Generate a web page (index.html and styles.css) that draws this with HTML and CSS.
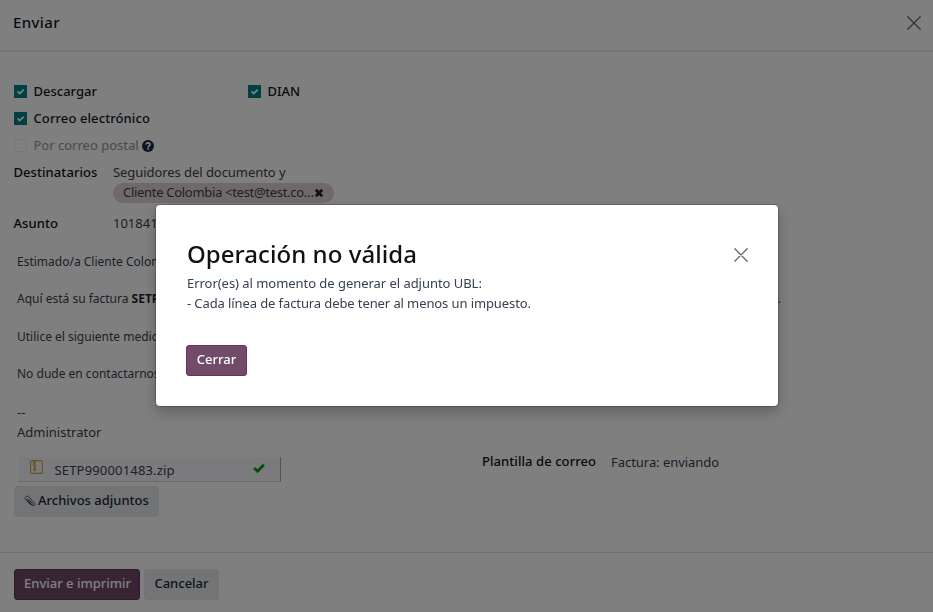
FILE: index.html
```html
<!DOCTYPE html>
<html lang="es">
<head>
<meta charset="utf-8">
<title>Enviar</title>
<link rel="stylesheet" href="styles.css">
</head>
<body>
<section class="wizard">
  <header class="wizard-header">
    <h1 class="wizard-title">Enviar</h1>
    <svg class="close-icon" viewBox="0 0 16 16"><path d="M1.8 1.8 14.2 14.2M14.2 1.8 1.8 14.2"/></svg>
  </header>
  <main class="wizard-body">
    <div class="options">
      <div class="option"><span class="check"><svg viewBox="0 0 13 13"><path d="M3.5 6.4 5.7 8.6 9.7 4.7"/></svg></span><span class="option-name">Descargar</span></div>
      <div class="option"><span class="check"><svg viewBox="0 0 13 13"><path d="M3.5 6.4 5.7 8.6 9.7 4.7"/></svg></span><span class="option-name">DIAN</span></div>
      <div class="option wide email"><span class="check"><svg viewBox="0 0 13 13"><path d="M3.5 6.4 5.7 8.6 9.7 4.7"/></svg></span><span class="option-name">Correo electrónico</span></div>
      <div class="option wide disabled"><span class="check empty"></span><span class="option-name">Por correo postal</span>
        <svg class="help" viewBox="0 0 12 12"><circle cx="6" cy="6" r="6"/><path d="M4.1 4.5C4.3 2.4 8 2.4 8 4.6 8 6 6.1 5.9 6.1 7.4M6.1 8.2V9.8"/></svg></div>
    </div>
    <div class="field recipients">
      <span class="label">Destinatarios</span>
      <div>
        <div class="line">Seguidores del documento y</div>
        <div class="tag"><span>Cliente Colombia &lt;test@test.co…</span><svg viewBox="0 0 10 10"><path d="M1.8 1.8 8.2 8.2M8.2 1.8 1.8 8.2"/></svg></div>
      </div>
    </div>
    <div class="field subject"><span class="label">Asunto</span><span class="value">101841</span></div>
    <div class="message">
      <p>Estimado/a Cliente Colom</p>
      <p class="spread"><span>Aquí está su factura <b>SETP</b></span><span>.</span></p>
      <p>Utilice el siguiente medio</p>
      <p>No dude en contactarnos</p>
      <p class="signature">--<br>Administrator</p>
    </div>
    <div class="columns">
      <div>
        <div class="attachment">
          <svg class="zip" viewBox="0 0 13 14"><rect x=".6" y=".6" width="11.8" height="12.8" rx="1"/><path d="M3.6 1V6M5.2 1V6M4.4 6 3.8 10.5H5.4L4.8 6"/></svg>
          <span class="filename">SETP990001483.zip</span>
          <svg class="done" viewBox="0 0 12 10"><path d="M1.2 5 4.5 8.2 10.8 1.8"/></svg>
        </div>
        <div class="btn secondary attach"><svg class="clip" viewBox="0 0 12 13"><path d="M2.8 4.2 8 10C9.6 11.8 11.9 9.8 10.4 8L4.8 1.9C3 0 0 2.2 1.7 4.4L7 10.2M4.5 4.2 8.4 8.5C9 9.4 8 10.1 7.2 9.4L2.8 4.6"/></svg><span>Archivos adjuntos</span></div>
      </div>
      <div class="template"><span class="label">Plantilla de correo</span><span class="template-value">Factura: enviando</span></div>
    </div>
  </main>
  <footer class="wizard-footer">
    <button class="btn primary">Enviar e imprimir</button>
    <button class="btn secondary">Cancelar</button>
  </footer>
</section>
<div class="backdrop">
  <section class="dialog">
    <header class="dialog-header">
      <h2>Operación no válida</h2>
      <svg class="close-icon" viewBox="0 0 16 16"><path d="M1.8 1.8 14.2 14.2M14.2 1.8 1.8 14.2"/></svg>
    </header>
    <p class="error-intro">Error(es) al momento de generar el adjunto UBL:</p>
    <p class="error-detail">- Cada línea de factura debe tener al menos un impuesto.</p>
    <button class="btn primary">Cerrar</button>
  </section>
</div>
</body>
</html>
```
FILE: styles.css
```css
* { box-sizing: border-box; }
body, h1, h2, p { margin: 0; }
body {
  height: 612px;
  overflow: hidden;
  background: #fff;
  color: #374151;
  font: 13px/20px "Noto Sans", sans-serif;
  white-space: nowrap;
}
svg { fill: none; flex: none; }

.wizard { display: flex; flex-direction: column; height: 612px; }
.wizard-header {
  display: flex; align-items: center; justify-content: space-between;
  height: 52px; padding: 0 11px 5px 13px;
  border-bottom: 2px solid #e9ebed;
}
.wizard-title { margin-bottom: 2px; color: #111827; font-size: 15px; font-weight: 500; letter-spacing: .4px; }
.close-icon { width: 16px; height: 16px; stroke: #666; stroke-width: 1.3; stroke-linecap: round; }

.wizard-body { flex: 1; padding: 26px 14px 0; }
.options { display: grid; grid-template-columns: 234px 1fr; grid-auto-rows: 27px; }
.option { display: flex; align-items: center; gap: 7px; color: #111827; font-weight: 500; }
.option-name { margin: 0 0 2px -.5px; }
.option.wide { grid-column: 1 / -1; }
.option.email { letter-spacing: .1px; }
.option.disabled { color: #8f959d; font-weight: 400; }
.check { width: 13px; height: 13px; background: #017e84; }
.check svg { display: block; width: 13px; height: 13px; stroke: #fff; stroke-width: 1.8; }
.check.empty { background: none; border: 1px solid #eceef0; }
.help { width: 12px; height: 12px; margin-left: -4px; fill: #1b2b4b; }
.help path { fill: none; stroke: #fff; stroke-width: 1.7; }

.label { margin-left: -.5px; color: #111; font-weight: 500; letter-spacing: .07px; }
.field { display: grid; grid-template-columns: 99px 1fr; }
.recipients { margin-top: 3px; height: 51px; }
.line { letter-spacing: -.06px; }
.tag {
  display: flex; align-items: center; gap: 0;
  width: 221px; height: 20px; margin-top: 1px; padding: 0 10px;
  border-radius: 10px; background: #e1d3d3;
  letter-spacing: -.3px; line-height: 18px;
}
.tag span { height: 20px; }
.tag svg { width: 10px; height: 10px; stroke: #222; stroke-width: 2.8; }

.message { padding: 19px 0 0 3px; font-size: 12px; }
.message p { margin-bottom: 17.4px; }
.message b { color: #1f2937; }
.spread { display: flex; justify-content: space-between; width: 764px; }
.message .signature { margin: 0; font-size: 13px; line-height: 20.5px; }

.columns { display: grid; grid-template-columns: 468.5px 1fr; margin-top: 14.4px; }
.attachment {
  display: flex; align-items: center;
  width: 263px; height: 25px; margin-left: 4px; padding-left: 12px;
  background: #f6f7fa;
  border-right: 1px solid #a8a8ac; border-bottom: 1px solid #dadbe0;
}
.zip { width: 13px; height: 14px; margin-bottom: 3px; stroke: #d0a43c; stroke-width: 1.1; }
.filename { margin: 2px 0 0 11.5px; width: 198.5px; letter-spacing: .17px; }
.done { width: 12px; height: 10px; margin-bottom: 1px; stroke: #00a009; stroke-width: 2.9; }
.template { display: flex; gap: 15px; margin-top: -6px; }
.template-value { margin-top: 1.5px; letter-spacing: -.05px; }

.btn {
  height: 31px; padding: 0 9px 2px;
  border: 1px solid; border-radius: 3px;
  font: 500 13px/27px "Noto Sans", sans-serif;
}
.primary { background: #714b67; border-color: #68335c; color: #fff; }
.secondary { background: #e7e9ed; border-color: #e7e9ed; color: #1f2937; }
.attach { display: flex; align-items: center; gap: 2px; width: 145px; margin-top: 4px; padding-bottom: 0; }
.attach span { height: 29px; }
.clip { width: 12px; height: 13px; stroke: #374151; stroke-width: .9; }

.wizard-footer {
  display: flex; gap: 4px;
  height: 60px; padding: 16px 14px 0;
  border-top: 1px solid #dee2e6;
}
.wizard-footer .primary { width: 126px; }
.wizard-footer .secondary { width: 75px; }

.backdrop { position: fixed; inset: 0; padding: 205px 0 0 156px; background: rgba(0, 0, 0, .5); }
.dialog {
  width: 622px; height: 201px; padding: 33px 29.5px 0 31px;
  background: #fff; border-radius: 4px;
  box-shadow: 0 0 0 1px rgba(0, 0, 0, .2), 0 6px 14px rgba(0, 0, 0, .25);
}
.dialog-header { display: flex; align-items: center; justify-content: space-between; height: 33px; }
.dialog h2 { margin-bottom: 2px; color: #111; font-size: 24px; font-weight: 500; line-height: 33px; letter-spacing: .05px; }
.error-intro { margin-top: 2px; letter-spacing: -.04px; }
.error-detail { letter-spacing: -.1px; }
.dialog .btn { display: block; width: 61px; margin: 32px 0 0 -1px; }
```
